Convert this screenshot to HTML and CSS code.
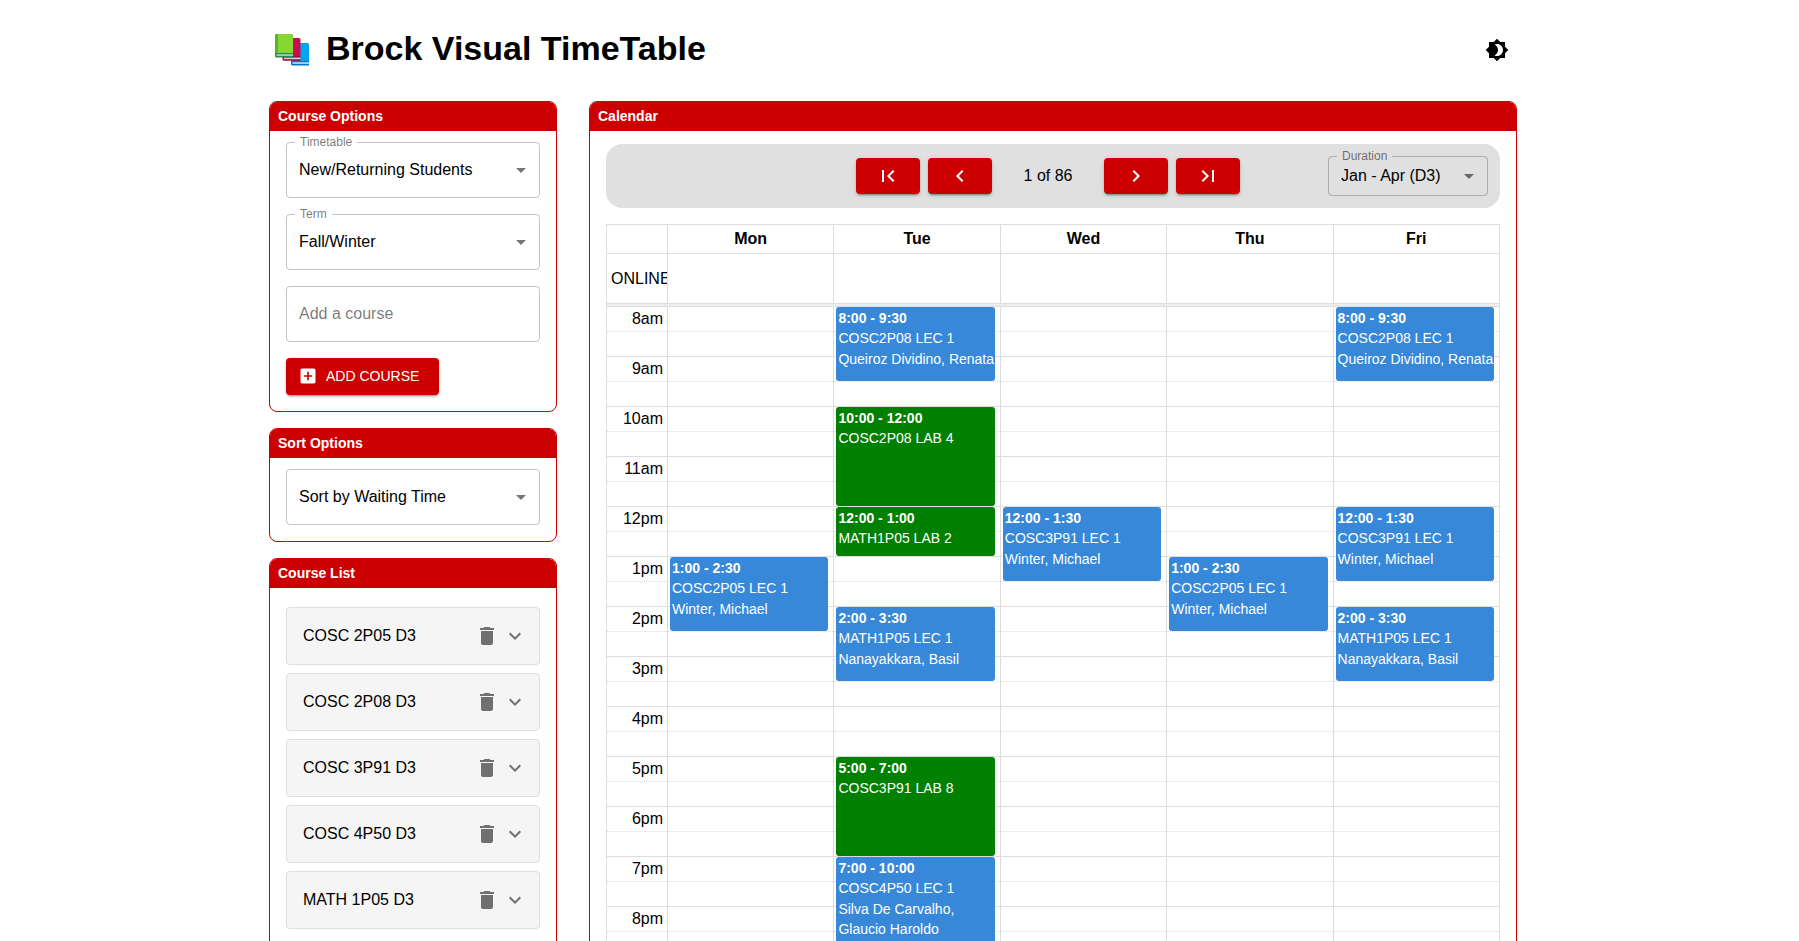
FILE: index.html
```html
<!DOCTYPE html>
<html lang="en">
<head>
<meta charset="utf-8">
<title>Brock Visual TimeTable</title>
<link rel="stylesheet" href="styles.css">
</head>
<body>
<svg class="sprite" aria-hidden="true">
  <symbol id="i-trash" viewBox="0 0 24 24"><path d="M6 19c0 1.1.9 2 2 2h8c1.1 0 2-.9 2-2V7H6v12zM19 4h-3.5l-1-1h-5l-1 1H5v2h14V4z"/></symbol>
  <symbol id="i-expand" viewBox="0 0 24 24"><path d="M16.59 8.59L12 13.17 7.41 8.59 6 10l6 6 6-6z"/></symbol>
  <symbol id="i-drop" viewBox="0 0 24 24"><path d="M7 10l5 5 5-5z"/></symbol>
</svg>
<div class="container">
  <header class="masthead">
    <svg class="logo" viewBox="0 0 34 32" aria-hidden="true">
      <path fill="#00a4ef" d="M16 9h16.500a1.500 1.500 0 0 1 1.500 1.500V27H16z"/>
      <path fill="#0078c8" d="M16 27h18v4.500H17.500a1.500 1.500 0 0 1-1.500-1.500z"/>
      <path fill="#d8e4ec" d="M17.500 28.300H34v1.500H17.500z"/>
      <path fill="#c90c50" d="M7.500 4H24a1.500 1.500 0 0 1 1.500 1.500V22h-18z"/>
      <path fill="#a0083e" d="M7.500 22h18v4.700H9A1.500 1.500 0 0 1 7.500 25z"/>
      <path fill="#e2cfd8" d="M9 23.600h16.500v1.600H9z"/>
      <path fill="#86d72f" d="M0 1.500A1.500 1.500 0 0 1 1.500 0h15A1.500 1.500 0 0 1 18 1.500V19H0z"/>
      <path fill="#5fae35" d="M0 1.500A1.500 1.500 0 0 1 1.500 0H3v19H0z"/>
      <path fill="#278a4e" d="M0 19h18v4.500H1.500A1.500 1.500 0 0 1 0 22z"/>
      <path fill="#c5dccb" d="M1.500 20.300H18v1.500H1.500z"/>
    </svg>
    <h1 class="title">Brock Visual TimeTable</h1>
    <button class="icon-button" type="button" aria-label="Toggle dark mode">
      <svg class="icon" viewBox="0 0 24 24"><path d="M20 8.690V4h-4.690L12 .690 8.690 4H4v4.690L.690 12 4 15.310V20h4.690L12 23.310 15.310 20H20v-4.690L23.310 12 20 8.690zM12 18c-.890 0-1.740-.200-2.500-.550C11.560 16.500 13 14.420 13 12s-1.440-4.500-3.500-5.450C10.260 6.200 11.110 6 12 6c3.310 0 6 2.690 6 6s-2.690 6-6 6z"/></svg>
    </button>
  </header>

  <main class="layout">
    <div class="sidebar">
      <section class="panel">
        <h2 class="panel-title">Course Options</h2>
        <form class="panel-body">
          <div class="field">
            <label class="field-label" for="timetable">Timetable</label>
            <select class="control" id="timetable"><option>New/Returning Students</option></select>
            <svg class="icon field-arrow"><use href="#i-drop"/></svg>
          </div>
          <div class="field">
            <label class="field-label" for="term">Term</label>
            <select class="control" id="term"><option>Fall/Winter</option></select>
            <svg class="icon field-arrow"><use href="#i-drop"/></svg>
          </div>
          <div class="field">
            <input class="control" type="text" aria-label="Add a course" placeholder="Add a course">
          </div>
          <button class="button add-button" type="button">
            <svg class="icon-small" viewBox="0 0 24 24"><path d="M19 3H5c-1.110 0-2 .900-2 2v14c0 1.100.890 2 2 2h14c1.100 0 2-.900 2-2V5c0-1.100-.900-2-2-2zm-2 10h-4v4h-2v-4H7v-2h4V7h2v4h4v2z"/></svg>
            ADD COURSE
          </button>
        </form>
      </section>

      <section class="panel">
        <h2 class="panel-title">Sort Options</h2>
        <div class="panel-body">
          <div class="field">
            <select class="control" aria-label="Sort order"><option>Sort by Waiting Time</option></select>
            <svg class="icon field-arrow"><use href="#i-drop"/></svg>
          </div>
        </div>
      </section>

      <section class="panel">
        <h2 class="panel-title">Course List</h2>
        <ul class="course-list">
          <li class="course"><span class="course-name">COSC 2P05 D3</span><button class="course-action" type="button" aria-label="Remove COSC 2P05"><svg class="icon"><use href="#i-trash"/></svg></button><button class="course-action" type="button" aria-label="Expand COSC 2P05"><svg class="icon"><use href="#i-expand"/></svg></button></li>
          <li class="course"><span class="course-name">COSC 2P08 D3</span><button class="course-action" type="button" aria-label="Remove COSC 2P08"><svg class="icon"><use href="#i-trash"/></svg></button><button class="course-action" type="button" aria-label="Expand COSC 2P08"><svg class="icon"><use href="#i-expand"/></svg></button></li>
          <li class="course"><span class="course-name">COSC 3P91 D3</span><button class="course-action" type="button" aria-label="Remove COSC 3P91"><svg class="icon"><use href="#i-trash"/></svg></button><button class="course-action" type="button" aria-label="Expand COSC 3P91"><svg class="icon"><use href="#i-expand"/></svg></button></li>
          <li class="course"><span class="course-name">COSC 4P50 D3</span><button class="course-action" type="button" aria-label="Remove COSC 4P50"><svg class="icon"><use href="#i-trash"/></svg></button><button class="course-action" type="button" aria-label="Expand COSC 4P50"><svg class="icon"><use href="#i-expand"/></svg></button></li>
          <li class="course"><span class="course-name">MATH 1P05 D3</span><button class="course-action" type="button" aria-label="Remove MATH 1P05"><svg class="icon"><use href="#i-trash"/></svg></button><button class="course-action" type="button" aria-label="Expand MATH 1P05"><svg class="icon"><use href="#i-expand"/></svg></button></li>
        </ul>
      </section>
    </div>

    <section class="panel">
      <h2 class="panel-title">Calendar</h2>
      <div class="calendar-body">
        <div class="toolbar">
          <div class="pager">
            <button class="button page-button" type="button" aria-label="First"><svg class="icon" viewBox="0 0 24 24"><path d="M18.410 16.590L13.820 12l4.590-4.590L17 6l-6 6 6 6zM6 6h2v12H6z"/></svg></button>
            <button class="button page-button" type="button" aria-label="Previous"><svg class="icon" viewBox="0 0 24 24"><path d="M15.410 7.410L14 6l-6 6 6 6 1.410-1.410L10.830 12z"/></svg></button>
            <span class="page-count">1 of 86</span>
            <button class="button page-button" type="button" aria-label="Next"><svg class="icon" viewBox="0 0 24 24"><path d="M10 6L8.590 7.410 13.170 12l-4.580 4.590L10 18l6-6z"/></svg></button>
            <button class="button page-button" type="button" aria-label="Last"><svg class="icon" viewBox="0 0 24 24"><path d="M5.590 7.410L10.180 12l-4.590 4.590L7 18l6-6-6-6zM16 6h2v12h-2z"/></svg></button>
          </div>
          <div class="field duration">
            <label class="field-label" for="duration">Duration</label>
            <select class="control control-dense" id="duration"><option>Jan - Apr (D3)</option></select>
            <svg class="icon field-arrow"><use href="#i-drop"/></svg>
          </div>
        </div>

        <table class="week">
          <colgroup><col class="axis-col"><col><col><col><col><col></colgroup>
          <thead>
            <tr class="days"><th></th><th scope="col">Mon</th><th scope="col">Tue</th><th scope="col">Wed</th><th scope="col">Thu</th><th scope="col">Fri</th></tr>
          </thead>
          <tbody>
            <tr class="online"><th scope="row">ONLINE</th><td></td><td></td><td></td><td></td><td></td></tr>
            <tr class="divider"><td colspan="6"></td></tr>
            <tr class="hour"><th scope="row">8am</th><td></td>
              <td><div class="event lec h90"><b>8:00 - 9:30</b><span>COSC2P08 LEC 1</span><span class="who">Queiroz Dividino, Renata</span></div></td>
              <td></td><td></td>
              <td><div class="event lec h90"><b>8:00 - 9:30</b><span>COSC2P08 LEC 1</span><span class="who">Queiroz Dividino, Renata</span></div></td></tr>
            <tr class="half"><td></td><td></td><td></td><td></td><td></td><td></td></tr>
            <tr class="hour"><th scope="row">9am</th><td></td><td></td><td></td><td></td><td></td></tr>
            <tr class="half"><td></td><td></td><td></td><td></td><td></td><td></td></tr>
            <tr class="hour"><th scope="row">10am</th><td></td>
              <td><div class="event lab h120"><b>10:00 - 12:00</b><span>COSC2P08 LAB 4</span></div></td>
              <td></td><td></td><td></td></tr>
            <tr class="half"><td></td><td></td><td></td><td></td><td></td><td></td></tr>
            <tr class="hour"><th scope="row">11am</th><td></td><td></td><td></td><td></td><td></td></tr>
            <tr class="half"><td></td><td></td><td></td><td></td><td></td><td></td></tr>
            <tr class="hour"><th scope="row">12pm</th><td></td>
              <td><div class="event lab h60"><b>12:00 - 1:00</b><span>MATH1P05 LAB 2</span></div></td>
              <td><div class="event lec h90"><b>12:00 - 1:30</b><span>COSC3P91 LEC 1</span><span class="who">Winter, Michael</span></div></td>
              <td></td>
              <td><div class="event lec h90"><b>12:00 - 1:30</b><span>COSC3P91 LEC 1</span><span class="who">Winter, Michael</span></div></td></tr>
            <tr class="half"><td></td><td></td><td></td><td></td><td></td><td></td></tr>
            <tr class="hour"><th scope="row">1pm</th>
              <td><div class="event lec h90"><b>1:00 - 2:30</b><span>COSC2P05 LEC 1</span><span class="who">Winter, Michael</span></div></td>
              <td></td><td></td>
              <td><div class="event lec h90"><b>1:00 - 2:30</b><span>COSC2P05 LEC 1</span><span class="who">Winter, Michael</span></div></td>
              <td></td></tr>
            <tr class="half"><td></td><td></td><td></td><td></td><td></td><td></td></tr>
            <tr class="hour"><th scope="row">2pm</th><td></td>
              <td><div class="event lec h90"><b>2:00 - 3:30</b><span>MATH1P05 LEC 1</span><span class="who">Nanayakkara, Basil</span></div></td>
              <td></td><td></td>
              <td><div class="event lec h90"><b>2:00 - 3:30</b><span>MATH1P05 LEC 1</span><span class="who">Nanayakkara, Basil</span></div></td></tr>
            <tr class="half"><td></td><td></td><td></td><td></td><td></td><td></td></tr>
            <tr class="hour"><th scope="row">3pm</th><td></td><td></td><td></td><td></td><td></td></tr>
            <tr class="half"><td></td><td></td><td></td><td></td><td></td><td></td></tr>
            <tr class="hour"><th scope="row">4pm</th><td></td><td></td><td></td><td></td><td></td></tr>
            <tr class="half"><td></td><td></td><td></td><td></td><td></td><td></td></tr>
            <tr class="hour"><th scope="row">5pm</th><td></td>
              <td><div class="event lab h120"><b>5:00 - 7:00</b><span>COSC3P91 LAB 8</span></div></td>
              <td></td><td></td><td></td></tr>
            <tr class="half"><td></td><td></td><td></td><td></td><td></td><td></td></tr>
            <tr class="hour"><th scope="row">6pm</th><td></td><td></td><td></td><td></td><td></td></tr>
            <tr class="half"><td></td><td></td><td></td><td></td><td></td><td></td></tr>
            <tr class="hour"><th scope="row">7pm</th><td></td>
              <td><div class="event lec h180"><b>7:00 - 10:00</b><span>COSC4P50 LEC 1</span><span class="who">Silva De Carvalho, Glaucio Haroldo</span></div></td>
              <td></td><td></td><td></td></tr>
            <tr class="half"><td></td><td></td><td></td><td></td><td></td><td></td></tr>
            <tr class="hour"><th scope="row">8pm</th><td></td><td></td><td></td><td></td><td></td></tr>
            <tr class="half"><td></td><td></td><td></td><td></td><td></td><td></td></tr>
            <tr class="hour"><th scope="row">9pm</th><td></td><td></td><td></td><td></td><td></td></tr>
            <tr class="half"><td></td><td></td><td></td><td></td><td></td><td></td></tr>
          </tbody>
        </table>
      </div>
    </section>
  </main>
</div>
</body>
</html>
```
FILE: styles.css
```css
:root {
  --red: #cc0000;
  --muted: rgba(0, 0, 0, 0.54);
  --outline: rgba(0, 0, 0, 0.23);
  --grid: #dddddd;
  --surface: #ffffff;
}

* {
  box-sizing: border-box;
}

html {
  scrollbar-width: none;
}

body {
  margin: 0;
  padding-right: 13px;
  background: var(--surface);
  color: #000000;
  font: 16px/24px "Liberation Sans", Arial, sans-serif;
}

button,
input,
select {
  font: inherit;
  color: inherit;
}

.sprite {
  display: none;
}

.icon {
  display: block;
  width: 24px;
  height: 24px;
  fill: currentColor;
}

.icon-small {
  width: 20px;
  height: 20px;
  fill: currentColor;
}

.container {
  max-width: 1248px;
  margin: 0 auto;
}

/* Masthead */
.masthead {
  display: flex;
  align-items: center;
  padding: 30px 0 31px 6px;
}

.logo {
  width: 34px;
  height: 32px;
}

.title {
  flex: 1;
  margin: 0 0 0 17px;
  padding-bottom: 3px;
  font-size: 34px;
  line-height: 37px;
}

.icon-button {
  padding: 8px;
  border: 0;
  background: none;
  cursor: pointer;
}

/* Panels */
.layout {
  display: grid;
  grid-template-columns: minmax(0, 9fr) minmax(0, 29fr);
  gap: 32px;
  align-items: start;
}

.sidebar {
  display: grid;
  gap: 16px;
}

.panel {
  overflow: hidden;
  border: 1px solid var(--red);
  border-radius: 8px;
}

.panel-title {
  margin: 0;
  padding: 3px 8px 4px;
  background: var(--red);
  color: #ffffff;
  font-size: 14px;
  line-height: 22px;
}

.panel-body {
  display: grid;
  gap: 16px;
  padding: 11px 16px 16px;
}

/* Form fields */
.field {
  position: relative;
}

.field-label {
  position: absolute;
  top: -8px;
  left: 9px;
  padding: 0 5px;
  background: var(--surface);
  color: var(--muted);
  font-size: 12px;
  line-height: 16px;
}

.control {
  display: block;
  width: 100%;
  height: 56px;
  padding: 0 32px 0 12px;
  border: 1px solid var(--outline);
  border-radius: 4px;
  background: transparent;
  appearance: none;
}

.control::placeholder {
  color: var(--muted);
  opacity: 1;
}

.control-dense {
  height: 40px;
}

.field-arrow {
  position: absolute;
  top: calc(50% - 12px);
  right: 7px;
  color: var(--muted);
  pointer-events: none;
}

.button {
  display: inline-flex;
  align-items: center;
  justify-content: center;
  border: 0;
  border-radius: 4px;
  background: var(--red);
  color: #ffffff;
  cursor: pointer;
  box-shadow: 0 3px 1px -2px rgba(0, 0, 0, 0.2), 0 2px 2px 0 rgba(0, 0, 0, 0.14), 0 1px 5px 0 rgba(0, 0, 0, 0.12);
}

.add-button {
  justify-self: start;
  gap: 8px;
  height: 37px;
  padding: 0 20px 1px 12px;
  font-size: 14px;
}

/* Course list */
.course-list {
  display: grid;
  gap: 8px;
  margin: 0;
  padding: 19px 16px 24px;
  list-style: none;
}

.course {
  display: flex;
  align-items: center;
  gap: 4px;
  padding: 16px 12px 16px 16px;
  border: 1px solid #dedede;
  border-radius: 4px;
  background: #f5f5f5;
}

.course-name {
  flex: 1;
}

.course-action {
  padding: 0;
  border: 0;
  background: none;
  color: var(--muted);
  cursor: pointer;
}

/* Calendar */
.calendar-body {
  padding: 13px 16px 16px;
}

.toolbar {
  --surface: #e0e0e0;
  display: grid;
  grid-template-columns: 1fr auto 1fr;
  align-items: center;
  height: 64px;
  margin-bottom: 16px;
  padding: 0 12px 0 2px;
  border-radius: 16px;
  background: var(--surface);
}

.pager {
  grid-column: 2;
  display: flex;
  align-items: center;
  gap: 8px;
}

.page-button {
  width: 64px;
  height: 36px;
  padding: 0;
}

.page-count {
  width: 96px;
  text-align: center;
}

.duration {
  justify-self: end;
  width: 160px;
}

.week {
  width: 100%;
  border-collapse: collapse;
  table-layout: fixed;
}

.axis-col {
  width: 61px;
}

.week th,
.week td {
  padding: 0;
  border: 1px solid var(--grid);
}

.week .days th {
  height: 29px;
}

.week .online th {
  height: 50px;
  padding-left: 4px;
  overflow: hidden;
  font-weight: normal;
  text-align: left;
}

.week .divider td {
  height: 3px;
  background: #eeeeee;
}

.hour,
.half {
  height: 25px;
}

.week .hour th {
  padding-right: 4px;
  border-bottom: 0;
  font-weight: normal;
  text-align: right;
}

.hour td {
  position: relative;
}

.week .hour td {
  border-bottom: 0;
}

.week .half td {
  border-top: 1px dotted var(--grid);
}

.event {
  position: absolute;
  z-index: 1;
  top: 0;
  left: 2px;
  right: 5px;
  padding: 1px 0 0 2px;
  border-radius: 3px;
  color: #ffffff;
  font-size: 14px;
  line-height: 20px;
}

.event b,
.event span {
  display: block;
}

.event .who {
  margin-top: 1px;
}

.lec {
  background: #3788d8;
}

.lab {
  background: #008000;
}

.h60 {
  height: 49px;
}

.h90 {
  height: 74px;
}

.h120 {
  height: 99px;
}

.h180 {
  height: 149px;
}
```
